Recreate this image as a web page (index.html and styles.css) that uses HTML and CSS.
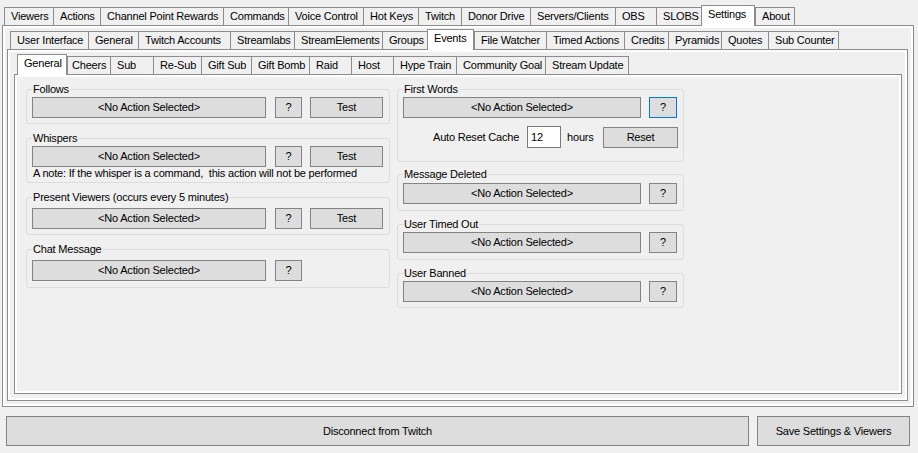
FILE: index.html
```html
<!DOCTYPE html>
<html>
<head>
<meta charset="utf-8">
<title>Settings - Events</title>
<link rel="stylesheet" href="styles.css">
</head>
<body>
<div class="app">
  <div class="tabctl outer">
    <div class="strip strip-main">
      <div class="tab">Viewers</div>
      <div class="tab">Actions</div>
      <div class="tab">Channel Point Rewards</div>
      <div class="tab">Commands</div>
      <div class="tab">Voice Control</div>
      <div class="tab">Hot Keys</div>
      <div class="tab">Twitch</div>
      <div class="tab">Donor Drive</div>
      <div class="tab">Servers/Clients</div>
      <div class="tab">OBS</div>
      <div class="tab">SLOBS</div>
      <div class="tab sel">Settings</div>
      <div class="tab last">About</div>
    </div>
    <div class="panel panel-outer">
      <div class="page">
        <div class="tabctl middle">
          <div class="strip strip-settings">
            <div class="tab">User Interface</div>
            <div class="tab">General</div>
            <div class="tab">Twitch Accounts</div>
            <div class="tab">Streamlabs</div>
            <div class="tab">StreamElements</div>
            <div class="tab">Groups</div>
            <div class="tab sel">Events</div>
            <div class="tab">File Watcher</div>
            <div class="tab">Timed Actions</div>
            <div class="tab">Credits</div>
            <div class="tab">Pyramids</div>
            <div class="tab">Quotes</div>
            <div class="tab last">Sub Counter</div>
          </div>
          <div class="panel panel-middle">
            <div class="page">
              <div class="tabctl inner">
                <div class="strip strip-events">
                  <div class="tab sel">General</div>
                  <div class="tab tab-cheers">Cheers</div>
                  <div class="tab">Sub</div>
                  <div class="tab">Re-Sub</div>
                  <div class="tab">Gift Sub</div>
                  <div class="tab">Gift Bomb</div>
                  <div class="tab">Raid</div>
                  <div class="tab">Host</div>
                  <div class="tab">Hype Train</div>
                  <div class="tab">Community Goal</div>
                  <div class="tab last">Stream Update</div>
                </div>
                <div class="panel panel-inner">
                  <div class="page events">
                    <div class="col col-left">
                      <fieldset class="gb gb-follows">
                        <legend>Follows</legend>
                        <div class="row">
                          <button class="btn combo-l">&lt;No Action Selected&gt;</button>
                          <button class="btn q">?</button>
                          <button class="btn test">Test</button>
                        </div>
                      </fieldset>
                      <fieldset class="gb gb-whispers">
                        <legend>Whispers</legend>
                        <div class="row">
                          <button class="btn combo-l">&lt;No Action Selected&gt;</button>
                          <button class="btn q">?</button>
                          <button class="btn test">Test</button>
                        </div>
                        <div class="note">A note: If the whisper is a command,&nbsp; this action will not be performed</div>
                      </fieldset>
                      <fieldset class="gb gb-present">
                        <legend>Present Viewers (occurs every 5 minutes)</legend>
                        <div class="row">
                          <button class="btn combo-l">&lt;No Action Selected&gt;</button>
                          <button class="btn q">?</button>
                          <button class="btn test">Test</button>
                        </div>
                      </fieldset>
                      <fieldset class="gb gb-chat">
                        <legend>Chat Message</legend>
                        <div class="row">
                          <button class="btn combo-l">&lt;No Action Selected&gt;</button>
                          <button class="btn q">?</button>
                        </div>
                      </fieldset>
                    </div>
                    <div class="col col-right">
                      <fieldset class="gb gb-first">
                        <legend>First Words</legend>
                        <div class="row">
                          <button class="btn combo-r">&lt;No Action Selected&gt;</button>
                          <button class="btn q q-r focus">?</button>
                        </div>
                        <div class="row cache-row">
                          <span class="cache-label">Auto Reset Cache</span>
                          <input class="textbox" type="text" value="12">
                          <span class="hours">hours</span>
                          <button class="btn reset">Reset</button>
                        </div>
                      </fieldset>
                      <fieldset class="gb gb-deleted">
                        <legend>Message Deleted</legend>
                        <div class="row">
                          <button class="btn combo-r">&lt;No Action Selected&gt;</button>
                          <button class="btn q q-r">?</button>
                        </div>
                      </fieldset>
                      <fieldset class="gb gb-timeout">
                        <legend>User Timed Out</legend>
                        <div class="row">
                          <button class="btn combo-r">&lt;No Action Selected&gt;</button>
                          <button class="btn q q-r">?</button>
                        </div>
                      </fieldset>
                      <fieldset class="gb gb-banned">
                        <legend>User Banned</legend>
                        <div class="row">
                          <button class="btn combo-r">&lt;No Action Selected&gt;</button>
                          <button class="btn q q-r">?</button>
                        </div>
                      </fieldset>
                    </div>
                  </div>
                </div>
              </div>
            </div>
          </div>
        </div>
      </div>
    </div>
  </div>
  <div class="bottom">
    <button class="btn big disconnect">Disconnect from Twitch</button>
    <button class="btn big save">Save Settings &amp; Viewers</button>
  </div>
</div>
</body>
</html>
```
FILE: styles.css
```css
* { box-sizing: border-box; }
html, body { margin: 0; padding: 0; }
body {
  background: #f0f0f0;
  font-family: "Liberation Sans", Arial, sans-serif;
  font-size: 11px;
  letter-spacing: -0.2px;
  color: #000;
  width: 918px;
  height: 453px;
  overflow: hidden;
}
.app { padding-top: 5px; }

/* tab controls */
.tabctl { display: flex; flex-direction: column; }
.outer { margin-left: 2px; width: 912px; }
.middle { margin: 0 3px 3px 2px; }
.inner { margin: 2px 3px 4px 4px; }
.strip-settings { margin-top: 1px; }

.strip {
  display: grid;
  height: 20px;
  align-items: end;
  position: relative;
  z-index: 2;
}
.strip-main {
  padding-left: 2px;
  grid-template-columns: 49px 47px 123px 65px 75px 55px 43px 69px 85px 41px 45px 54px 40px;
}
.strip-settings {
  padding-left: 3px;
  grid-template-columns: 78px 50px 92px 64px 88px 45px 47px 72px 78px 44px 53px 47px 71px;
}
.strip-events {
  padding-left: 3px;
  grid-template-columns: 50px 43px 43px 48px 50px 58px 42px 42px 63px 89px 84px;
}
.tab {
  height: 18px;
  border: 1px solid #8c8c8c;
  border-right: none;
  border-bottom: none;
  background: #f0f0f0;
  padding: 2px 0 0 6px;
  line-height: 13px;
  white-space: nowrap;
  overflow: hidden;
}
.tab.last { border-right: 1px solid #8c8c8c; }
.tab.sel {
  height: 21px;
  margin-bottom: -1px;
  background: #fff;
  border-right: 1px solid #8c8c8c;
}
.tab-cheers { padding-left: 4px; }

.panel {
  border: 1px solid #8c8c8c;
  background: #fff;
  padding: 2px;
  display: flex;
  flex-direction: column;
}
.panel-outer { height: 382px; }
.panel-middle { height: 352px; }
.panel-inner { height: 320px; }
.page {
  flex: 1;
  background: #f0f0f0;
  display: flex;
  flex-direction: column;
}

/* events page */
.page.events {
  flex-direction: row;
  align-items: flex-start;
  padding: 5px 0 0 9px;
  gap: 7px;
}
.col { display: flex; flex-direction: column; }
.col-left { width: 364px; }
.col-right { width: 287px; }

.gb {
  border: 1px solid #dcdcdc;
  border-radius: 3px;
  margin: 0;
  padding: 1px 5px 5px 5px;
  min-width: 0;
}
.gb legend {
  padding: 0 1px;
  line-height: 14px;
  margin: 0;
}
.gb-whispers { margin-top: 7px; padding-bottom: 2px; }
.gb-present { margin-top: 7px; padding-top: 4px; }
.gb-chat { margin-top: 7px; padding-top: 4px; padding-bottom: 6px; }
.gb-first { padding-bottom: 13px; }
.gb-deleted { margin-top: 5px; padding-top: 2px; padding-bottom: 6px; }
.gb-timeout { margin-top: 6px; padding-bottom: 6px; }
.gb-banned { margin-top: 6px; }

.row { display: flex; align-items: center; }
.note { line-height: 13px; padding-left: 1px; white-space: nowrap; }

.btn {
  font: inherit;
  letter-spacing: inherit;
  color: #000;
  background: #dddddd;
  border: 1px solid #838383;
  border-radius: 0;
  padding: 0;
  height: 21px;
  line-height: 19px;
  text-align: center;
  margin: 0;
}
.combo-l { width: 234px; }
.combo-r { width: 238px; }
.q { width: 27px; margin-left: 9px; }
.q-r { width: 28px; margin-left: 8px; }
.test { width: 73px; margin-left: 8px; }
.btn.focus { border-color: #0078d7; }

.cache-row { margin-top: 8px; height: 22px; }
.cache-label { margin-left: 30px; }
.textbox {
  font: inherit;
  letter-spacing: inherit;
  width: 34px;
  height: 22px;
  margin: 0 0 0 8px;
  padding: 0 0 0 3px;
  border: 1px solid #7a7a7a;
  background: #fff;
  color: #000;
  outline: none;
}
.hours { margin-left: 6px; }
.reset { width: 75px; margin-left: auto; }

/* bottom buttons */
.bottom {
  display: flex;
  margin: 9px 0 0 6px;
  gap: 8px;
}
.btn.big { height: 30px; line-height: 28px; }
.disconnect { width: 743px; }
.save { width: 153px; }
```
